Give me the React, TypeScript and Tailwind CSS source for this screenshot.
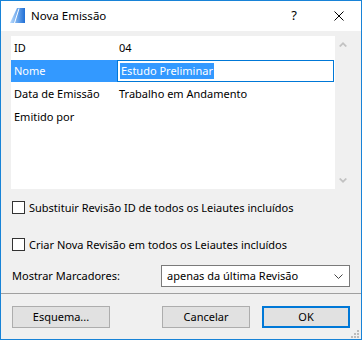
import React from 'react';

const rows = [
  { label: 'ID', value: '04' },
  { label: 'Nome', value: 'Estudo Preliminar', editing: true },
  { label: 'Data de Emissão', value: 'Trabalho em Andamento' },
  { label: 'Emitido por', value: '' },
];

function AppIcon() {
  return (
    <svg width="16" height="16" viewBox="0 0 16 16">
      <defs>
        <linearGradient id="sail" x1="0" y1="0" x2="1" y2="0">
          <stop offset="0" stopColor="#b9dcff" />
          <stop offset="1" stopColor="#1f6fd6" />
        </linearGradient>
      </defs>
      <polygon points="0,15 7,0 15,0 15,15" fill="url(#sail)" />
      <line x1="4.5" y1="15" x2="9" y2="0.5" stroke="#ffffff" strokeWidth="1" />
    </svg>
  );
}

function Checkbox({ label }: { label: string }) {
  return (
    <div className="flex items-center gap-[4px] h-[13px] ml-[11px]">
      <div className="w-[13px] h-[13px] border border-[#333333] bg-white shrink-0" />
      <span className="leading-[13px]">{label}</span>
    </div>
  );
}

export default function App() {
  return (
    <div className="relative w-[362px] h-[340px] border border-[#1883d7] bg-[#f0f0f0] flex flex-col text-[11px] text-black font-['Noto_Sans',sans-serif]">
      {/* title bar */}
      <div className="h-[30px] bg-white flex items-center pl-[9px] shrink-0">
        <AppIcon />
        <span className="ml-[5px] text-[11.5px]">Nova Emissão</span>
        <span className="ml-auto text-[13px] mr-[37px]">?</span>
        <svg width="10" height="10" viewBox="0 0 10 10" className="mr-[17px]">
          <path d="M0.5 0.5 L9.5 9.5 M9.5 0.5 L0.5 9.5" stroke="#000" strokeWidth="1" />
        </svg>
      </div>

      {/* property list */}
      <div className="flex ml-[10px] mt-[5px] h-[153px] w-[339px]">
        <div className="w-[324px] bg-white pt-px">
          {rows.map((r) => (
            <div key={r.label} className="flex h-[23px]">
              <div
                className={
                  r.editing
                    ? 'w-[106px] h-[22px] pl-[3px] flex items-center bg-[#3399ff] text-white'
                    : 'w-[106px] pl-[3px] flex items-center'
                }
              >
                {r.label}
              </div>
              {r.editing ? (
                <div className="w-[217px] h-[22px] border border-[#0078d7] flex items-center pl-[2px]">
                  <span className="bg-[#3399ff] text-white leading-[16px] px-px">{r.value}</span>
                </div>
              ) : (
                <div className="pl-[2px] flex items-center">{r.value}</div>
              )}
            </div>
          ))}
        </div>
        <div className="w-[15px] flex flex-col items-center justify-between pt-[6px] pb-[6px]">
          <svg width="8" height="5" viewBox="0 0 8 5">
            <path d="M0 4 L4 0 L8 4 L6.5 5 L4 2.5 L1.5 5 Z" fill="#c2c2c2" />
          </svg>
          <svg width="8" height="5" viewBox="0 0 8 5">
            <path d="M0 1 L4 5 L8 1 L6.5 0 L4 2.5 L1.5 0 Z" fill="#c2c2c2" />
          </svg>
        </div>
      </div>

      <div className="mt-[12px]">
        <Checkbox label="Substituir Revisão ID de todos os Leiautes incluídos" />
      </div>
      <div className="mt-[24px]">
        <Checkbox label="Criar Nova Revisão em todos os Leiautes incluídos" />
      </div>

      {/* markers */}
      <div className="flex items-center mt-[14px] ml-[11px]">
        <span className="w-[149px]">Mostrar Marcadores:</span>
        <div className="w-[189px] h-[22px] border border-[#7a7a7a] bg-white flex items-center pl-[5px] pr-[6px]">
          <span>apenas da última Revisão</span>
          <svg width="9" height="5" viewBox="0 0 9 5" className="ml-auto">
            <path d="M0.5 0.5 L4.5 4.5 L8.5 0.5" stroke="#444" strokeWidth="1" fill="none" />
          </svg>
        </div>
      </div>

      <div className="mt-[6px] h-px bg-[#a0a0a0]" />

      {/* buttons */}
      <div className="flex mt-[12px] ml-[11px]">
        <button className="w-[98px] h-[22px] bg-[#e1e1e1] border border-[#adadad]">Esquema...</button>
        <button className="ml-[52px] w-[88px] h-[22px] bg-[#e1e1e1] border border-[#adadad]">Cancelar</button>
        <button className="ml-[12px] w-[88px] h-[22px] bg-[#e1e1e1] border-2 border-[#0078d7]">OK</button>
      </div>

      {/* resize grip */}
      <div className="absolute right-[2px] bottom-[1px] grid grid-cols-3 gap-px">
        <span className="w-[2px] h-[2px]" />
        <span className="w-[2px] h-[2px]" />
        <span className="w-[2px] h-[2px] bg-[#bcbcbc]" />
        <span className="w-[2px] h-[2px]" />
        <span className="w-[2px] h-[2px] bg-[#bcbcbc]" />
        <span className="w-[2px] h-[2px] bg-[#bcbcbc]" />
        <span className="w-[2px] h-[2px] bg-[#bcbcbc]" />
        <span className="w-[2px] h-[2px] bg-[#bcbcbc]" />
        <span className="w-[2px] h-[2px] bg-[#bcbcbc]" />
      </div>
    </div>
  );
}
